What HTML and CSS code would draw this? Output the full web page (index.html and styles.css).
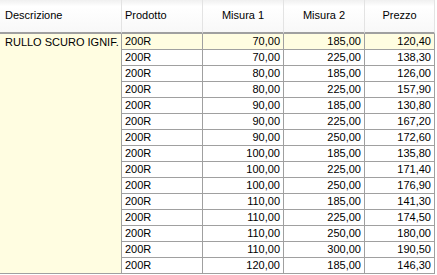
FILE: index.html
```html
<!DOCTYPE html>
<html>
<head>
<meta charset="utf-8">
<link rel="stylesheet" href="styles.css">
</head>
<body>
<table class="grid">
  <colgroup>
    <col class="c-desc"><col class="c-prod"><col class="c-num"><col class="c-num"><col class="c-price">
  </colgroup>
  <thead>
    <tr>
      <th class="h-left">Descrizione</th>
      <th class="h-left h-prod">Prodotto</th>
      <th>Misura 1</th>
      <th>Misura 2</th>
      <th>Prezzo</th>
    </tr>
  </thead>
  <tbody>
    <tr class="sel"><td class="desc" rowspan="15">RULLO SCURO IGNIF.</td><td class="prod">200R</td><td class="num">70,00</td><td class="num">185,00</td><td class="num">120,40</td></tr>
    <tr><td class="prod">200R</td><td class="num">70,00</td><td class="num">225,00</td><td class="num">138,30</td></tr>
    <tr><td class="prod">200R</td><td class="num">80,00</td><td class="num">185,00</td><td class="num">126,00</td></tr>
    <tr><td class="prod">200R</td><td class="num">80,00</td><td class="num">225,00</td><td class="num">157,90</td></tr>
    <tr><td class="prod">200R</td><td class="num">90,00</td><td class="num">185,00</td><td class="num">130,80</td></tr>
    <tr><td class="prod">200R</td><td class="num">90,00</td><td class="num">225,00</td><td class="num">167,20</td></tr>
    <tr><td class="prod">200R</td><td class="num">90,00</td><td class="num">250,00</td><td class="num">172,60</td></tr>
    <tr><td class="prod">200R</td><td class="num">100,00</td><td class="num">185,00</td><td class="num">135,80</td></tr>
    <tr><td class="prod">200R</td><td class="num">100,00</td><td class="num">225,00</td><td class="num">171,40</td></tr>
    <tr><td class="prod">200R</td><td class="num">100,00</td><td class="num">250,00</td><td class="num">176,90</td></tr>
    <tr><td class="prod">200R</td><td class="num">110,00</td><td class="num">185,00</td><td class="num">141,30</td></tr>
    <tr><td class="prod">200R</td><td class="num">110,00</td><td class="num">225,00</td><td class="num">174,50</td></tr>
    <tr><td class="prod">200R</td><td class="num">110,00</td><td class="num">250,00</td><td class="num">180,00</td></tr>
    <tr><td class="prod">200R</td><td class="num">110,00</td><td class="num">300,00</td><td class="num">190,50</td></tr>
    <tr><td class="prod">200R</td><td class="num">120,00</td><td class="num">185,00</td><td class="num">146,30</td></tr>
  </tbody>
</table>
</body>
</html>
```

FILE: styles.css
```css
html, body {
  margin: 0;
  padding: 0;
  background: #ffffff;
  overflow: hidden;
}
.grid {
  border-collapse: separate;
  border-spacing: 0;
  table-layout: fixed;
  width: 435px;
  font-family: "Liberation Sans", Arial, sans-serif;
  font-size: 11px;
  color: #000;
}
.c-desc { width: 122px; }
.c-prod { width: 81px; }
.c-num { width: 81px; }
.c-price { width: 70px; }
.grid th {
  height: 34px;
  box-sizing: border-box;
  padding: 0 0 3px 0;
  font-weight: normal;
  text-align: center;
  background: linear-gradient(#f0f0f0 0%, #ffffff 20%, #f8f8f8 100%);
  border-right: 1px solid #e3e3e3;
  border-bottom: 2px solid #a0a0a0;
}
.grid th.h-left { text-align: left; padding-left: 5px; }
.grid th.h-prod { padding-left: 3px; }
.grid td {
  height: 16px;
  box-sizing: border-box;
  padding: 0 3px;
  border-right: 1px solid #a0a0a0;
  border-bottom: 1px solid #a0a0a0;
  white-space: nowrap;
  overflow: hidden;
  line-height: 15px;
}
.grid td.desc {
  vertical-align: top;
  background: #fffde1;
  padding: 1px 5px;
}
.grid td.num { text-align: right; }
.grid tr.sel td { background: #fffde1; }
```
